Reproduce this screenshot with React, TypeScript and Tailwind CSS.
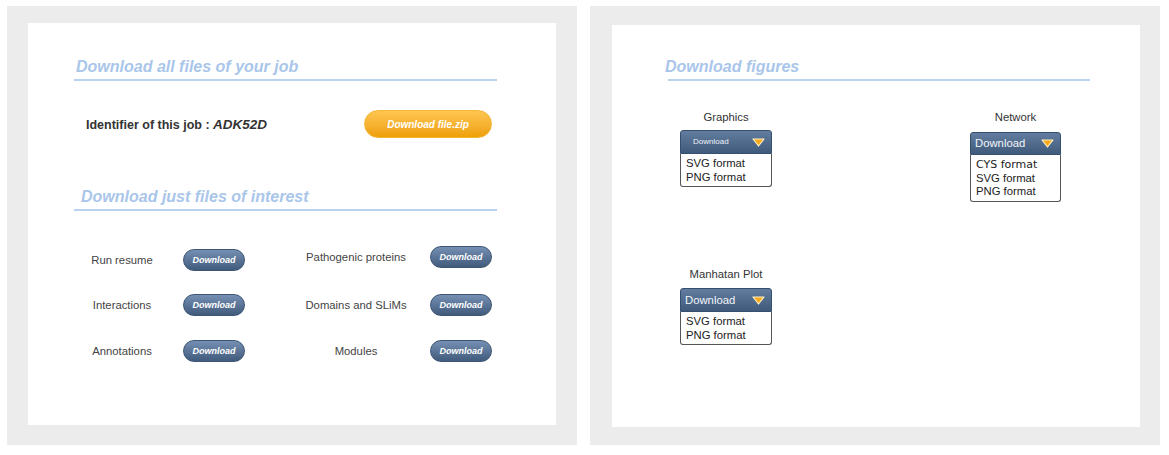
import React from 'react';

const SANS = "font-['Liberation_Sans',Arial,sans-serif]";

const fileRowsLeft = [
  { label: 'Run resume', mt: 'mt-[38px]' },
  { label: 'Interactions', mt: 'mt-[23px]' },
  { label: 'Annotations', mt: 'mt-[24px]' },
];

const fileRowsRight = [
  { label: 'Pathogenic proteins', mt: 'mt-[35px]' },
  { label: 'Domains and SLiMs', mt: 'mt-[26px]' },
  { label: 'Modules', mt: 'mt-[24px]' },
];

// blue pill button
function SmallDownload({ className }: { className: string }) {
  return (
    <button
      className={`block h-[22px] w-[62px] shrink-0 rounded-full border border-[#3d5676] bg-gradient-to-b from-[#7590b2] to-[#415b7d] text-[9px] leading-[20px] font-bold italic text-white ${className}`}
    >
      Download
    </button>
  );
}

function SectionTitle({ text, textClass, boxClass }: { text: string; textClass: string; boxClass: string }) {
  return (
    <div className={`border-b-2 border-[#b9d2f0] pb-[2px] ${boxClass}`}>
      <h2 className={`text-[16px] leading-[20px] font-bold italic text-[#a9c6ea] ${textClass}`}>{text}</h2>
    </div>
  );
}

function Triangle() {
  return (
    <svg width="13" height="9" viewBox="0 0 13 9">
      <polygon points="1,1 12,1 6.5,8" fill="#f7a81b" stroke="#fff2c4" strokeWidth="1.2" strokeLinejoin="round" />
    </svg>
  );
}

interface FigureDropdownProps {
  label: string;
  formats: { name: string; cls?: string }[];
  btnText: string;
  btnH: string;
  gap: string;
}

function FigureDropdown({ label, formats, btnText, btnH, gap }: FigureDropdownProps) {
  return (
    <div className="flex flex-col">
      <div className="text-center text-[11.3px] leading-[13px] text-[#333]">{label}</div>
      <div
        className={`${gap} ${btnH} flex items-center justify-between rounded-t-[3px] border border-[#35506f] bg-gradient-to-b from-[#627d9f] to-[#405a7b] pr-[6px] ${btnText === 'small' ? 'pl-[12px]' : 'pl-[4px]'}`}
      >
        <span className={btnText === 'small' ? 'text-[8px] text-[#eef2f7]' : 'text-[11.3px] text-[#f2f5f9]'}>Download</span>
        <Triangle />
      </div>
      <div className="rounded-b-[3px] border border-t-0 border-[#555] bg-white pt-[3px] pb-[2px] pl-[5px]">
        {formats.map((f) => (
          <div key={f.name} className={`leading-[13.5px] text-[#222] ${f.cls ?? 'text-[11.3px]'}`}>
            {f.name}
          </div>
        ))}
      </div>
    </div>
  );
}

export default function App() {
  return (
    <div className={`flex gap-[13px] pl-[7px] pt-[6px] ${SANS}`}>
      {/* 左侧面板 */}
      <section className="h-[439px] w-[570px] bg-[#ececec] pl-[21px] pt-[17px]">
        <div className="h-[402px] w-[528px] bg-white pt-[34px]">
          <SectionTitle text="Download all files of your job" boxClass="ml-[46px] w-[423px]" textClass="pl-[2px]" />

          <div className="ml-[58px] mt-[29px] flex h-[28px] w-[406px] items-center justify-between">
            <div className="font-bold text-[#333]">
              <span className="text-[12.5px]">Identifier of this job : </span>
              <span className="text-[13.5px] italic">ADK52D</span>
            </div>
            <button className="h-[28px] w-[128px] rounded-full border border-[#f3b63a] bg-gradient-to-b from-[#ffc64e] to-[#eea000] text-[10px] font-bold italic text-white">
              Download file.zip
            </button>
          </div>

          <div className="mt-[49px]">
            <SectionTitle text="Download just files of interest" boxClass="ml-[46px] w-[423px]" textClass="pl-[7px]" />
          </div>

          <div className="flex">
            <div className="ml-[54px] flex flex-col">
              {fileRowsLeft.map((r) => (
                <div key={r.label} className={`${r.mt} flex h-[22px] items-center`}>
                  <span className="w-[80px] text-center text-[11.3px] leading-[14px] text-[#444]">{r.label}</span>
                  <SmallDownload className="ml-[21px]" />
                </div>
              ))}
            </div>
            <div className="ml-[46px] flex flex-col">
              {fileRowsRight.map((r) => (
                <div key={r.label} className={`${r.mt} flex h-[22px] items-center`}>
                  <span className="w-[130px] text-center text-[11.3px] leading-[14px] text-[#444]">{r.label}</span>
                  <SmallDownload className="ml-[9px]" />
                </div>
              ))}
            </div>
          </div>
        </div>
      </section>

      {/* 右侧面板 */}
      <section className="h-[439px] w-[570px] bg-[#ececec] pl-[22px] pt-[19px]">
        <div className="h-[402px] w-[528px] bg-white pt-[32px]">
          <SectionTitle text="Download figures" boxClass="ml-[56px] w-[422px]" textClass="-ml-[3px]" />

          <div className="mt-[30px] flex items-start">
            <div className="ml-[68px] flex w-[92px] flex-col">
              <FigureDropdown
                label="Graphics"
                btnText="small"
                btnH="h-[24px]"
                gap="mt-[6px]"
                formats={[{ name: 'SVG format' }, { name: 'PNG format' }]}
              />
              <div className="mt-[81px]">
                <FigureDropdown
                  label="Manhatan Plot"
                  btnText="normal"
                  btnH="h-[24px]"
                  gap="mt-[7px]"
                  formats={[{ name: 'SVG format' }, { name: 'PNG format' }]}
                />
              </div>
            </div>
            <div className="ml-[198px] w-[91px]">
              <FigureDropdown
                label="Network"
                btnText="normal"
                btnH="h-[23px]"
                gap="mt-[8px]"
                formats={[
                  { name: 'CYS format', cls: "text-[11px] font-['DejaVu_Sans',sans-serif]" },
                  { name: 'SVG format' },
                  { name: 'PNG format' },
                ]}
              />
            </div>
          </div>
        </div>
      </section>
    </div>
  );
}
